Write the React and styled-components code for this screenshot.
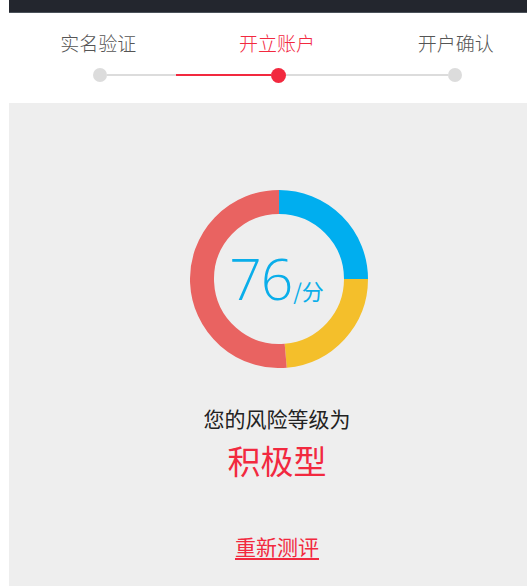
import React from "react";
import styled, { createGlobalStyle } from "styled-components";

const Global = createGlobalStyle`
  html, body { margin: 0; padding: 0; background: #fff; overflow: hidden; }
  body { font-family: "Noto Sans CJK SC", "Noto Sans", sans-serif; }
`;

const Page = styled.div`
  width: 536px;
  margin-left: 9px;
  height: 586px;
  display: flex;
  flex-direction: column;
`;

const StatusBar = styled.div`
  height: 12px;
  background: #23262e;
  border-bottom: 1px solid #4b525a;
`;

const Header = styled.div`
  background: #fff;
  height: 90px;
  box-sizing: border-box;
  padding-top: 17px;
`;

const Labels = styled.div`
  display: grid;
  grid-template-columns: repeat(3, 1fr);
`;

const Label = styled.div`
  text-align: center;
  font-size: 19px;
  line-height: 26px;
  font-weight: 300;
  color: ${(p) => (p.$active ? "#f2293f" : "#555")};
`;

const Track = styled.div`
  display: flex;
  align-items: center;
  margin: 12px 83px 0 84px;
  height: 14px;
`;

const Dot = styled.div`
  width: ${(p) => (p.$active ? 15 : 14)}px;
  height: ${(p) => (p.$active ? 15 : 14)}px;
  border-radius: 50%;
  flex: none;
  background: ${(p) => (p.$active ? "#f2293f" : "#dcdcdc")};
`;

const Seg = styled.div`
  height: 2px;
  flex: ${(p) => p.$grow};
  background: ${(p) => (p.$active ? "#f2293f" : "#dcdcdc")};
`;

const Body = styled.div`
  flex: 1;
  background: #eeeeee;
  display: flex;
  flex-direction: column;
  align-items: center;
  padding-top: 87px;
`;

const Ring = styled.div`
  width: 178px;
  height: 178px;
  display: grid;
  margin-left: 3px;
  & > * { grid-area: 1 / 1; }
`;

const Score = styled.div`
  display: flex;
  align-items: baseline;
  justify-content: center;
  align-self: center;
  color: #0aaeea;
  font-family: "Open Sans", "Noto Sans", sans-serif;
  font-weight: 300;
  margin-top: -2px;
  margin-left: -4px;
`;

const Big = styled.span`
  font-size: 57px;
  line-height: 1;
  letter-spacing: -1px;
`;

const Unit = styled.span`
  font-size: 22px;
  margin-left: 1px;
  font-family: "Noto Sans CJK SC", sans-serif;
  font-weight: 400;
`;

const Caption = styled.div`
  margin-top: 36px;
  font-size: 21px;
  line-height: 28px;
  color: #222;
`;

const Level = styled.div`
  margin-top: 6px;
  font-size: 33px;
  line-height: 44px;
  color: #f2293f;
`;

const Retest = styled.a`
  margin-top: 50px;
  font-size: 21px;
  line-height: 28px;
  color: #f2293f;
  text-decoration: underline;
  text-underline-offset: 3px;
`;

function arc(cx, cy, r, a0, a1) {
  const rad = (a) => ((a - 90) * Math.PI) / 180;
  const x0 = cx + r * Math.cos(rad(a0));
  const y0 = cy + r * Math.sin(rad(a0));
  const x1 = cx + r * Math.cos(rad(a1));
  const y1 = cy + r * Math.sin(rad(a1));
  const large = a1 - a0 > 180 ? 1 : 0;
  return `M ${x0} ${y0} A ${r} ${r} 0 ${large} 1 ${x1} ${y1}`;
}

function Donut() {
  const c = 89;
  const r = 77;
  const w = 24;
  return (
    <svg width="178" height="178" viewBox="0 0 178 178">
      <path d={arc(c, c, r, 0, 90)} stroke="#00aeef" strokeWidth={w} fill="none" />
      <path d={arc(c, c, r, 90, 175)} stroke="#f4bf2b" strokeWidth={w} fill="none" />
      <path d={arc(c, c, r, 175, 360)} stroke="#e96361" strokeWidth={w} fill="none" />
    </svg>
  );
}

export default function App() {
  return (
    <Page>
      <Global />
      <StatusBar />
      <Header>
        <Labels>
          <Label>实名验证</Label>
          <Label $active>开立账户</Label>
          <Label>开户确认</Label>
        </Labels>
        <Track>
          <Dot />
          <Seg $grow={69} />
          <Seg $grow={96} $active />
          <Dot $active />
          <Seg $grow={162} />
          <Dot />
        </Track>
      </Header>
      <Body>
        <Ring>
          <Donut />
          <Score>
            <Big>76</Big>
            <Unit>/分</Unit>
          </Score>
        </Ring>
        <Caption>您的风险等级为</Caption>
        <Level>积极型</Level>
        <Retest>重新测评</Retest>
      </Body>
    </Page>
  );
}
